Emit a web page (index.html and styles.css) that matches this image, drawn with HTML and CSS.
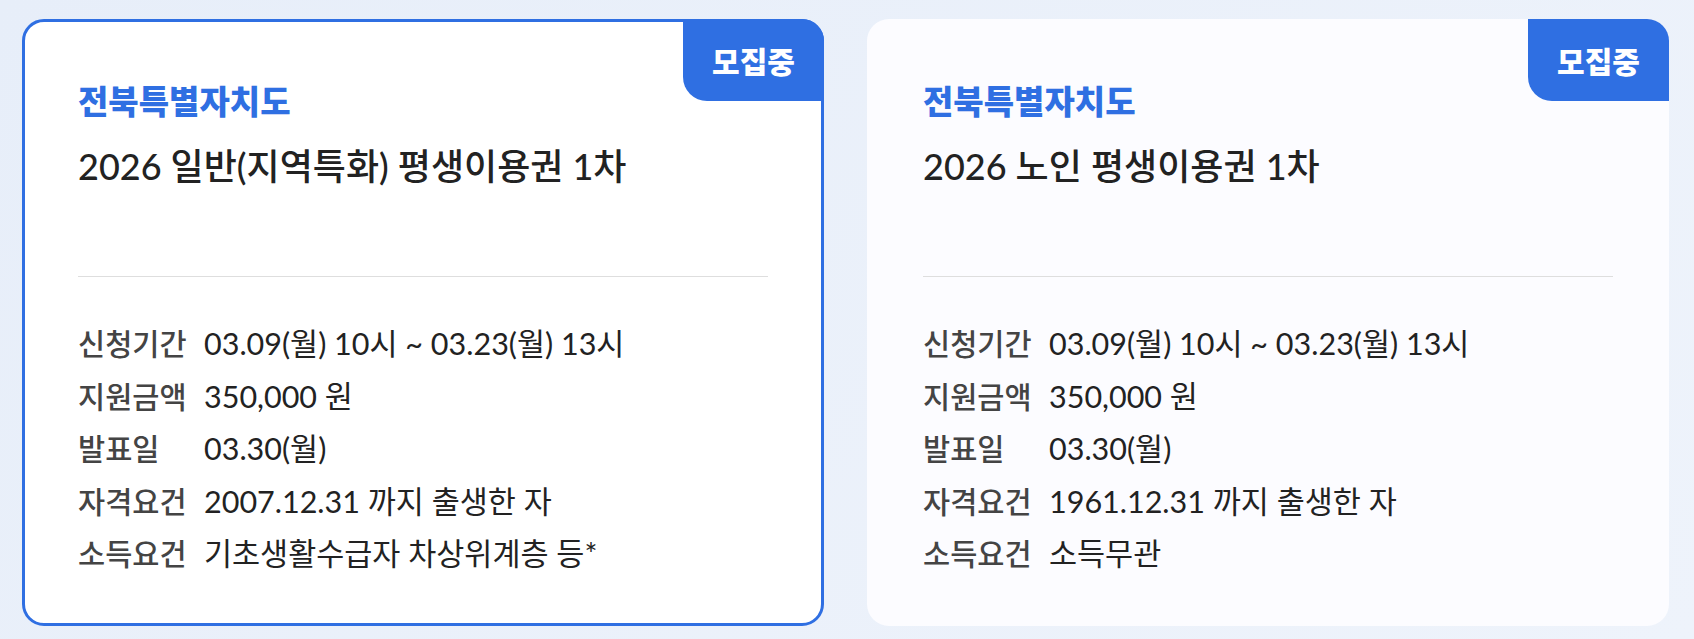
FILE: index.html
```html
<!DOCTYPE html>
<html>
<head>
  <meta charset="utf-8">
  <link rel="stylesheet" href="styles.css">
</head>
<body>
  <div class="voucher-list">
    <div class="voucher-card active">
      <div class="badge">모집중</div>
      <div class="region">전북특별자치도</div>
      <div class="title">2026 일반(지역특화) 평생이용권 1차</div>
      <div class="divider"></div>
      <div class="info">
        <div class="info-row"><span class="info-label">신청기간</span><span class="info-value">03.09(월) 10시 ~ 03.23(월) 13시</span></div>
        <div class="info-row"><span class="info-label">지원금액</span><span class="info-value">350,000 원</span></div>
        <div class="info-row"><span class="info-label">발표일</span><span class="info-value">03.30(월)</span></div>
        <div class="info-row"><span class="info-label">자격요건</span><span class="info-value">2007.12.31 까지 출생한 자</span></div>
        <div class="info-row"><span class="info-label">소득요건</span><span class="info-value">기초생활수급자 차상위계층 등*</span></div>
      </div>
    </div>

    <div class="voucher-card">
      <div class="badge">모집중</div>
      <div class="region">전북특별자치도</div>
      <div class="title">2026 노인 평생이용권 1차</div>
      <div class="divider"></div>
      <div class="info">
        <div class="info-row"><span class="info-label">신청기간</span><span class="info-value">03.09(월) 10시 ~ 03.23(월) 13시</span></div>
        <div class="info-row"><span class="info-label">지원금액</span><span class="info-value">350,000 원</span></div>
        <div class="info-row"><span class="info-label">발표일</span><span class="info-value">03.30(월)</span></div>
        <div class="info-row"><span class="info-label">자격요건</span><span class="info-value">1961.12.31 까지 출생한 자</span></div>
        <div class="info-row"><span class="info-label">소득요건</span><span class="info-value">소득무관</span></div>
      </div>
    </div>
  </div>
</body>
</html>
```

FILE: styles.css
```css
body {
  margin: 0;
  font-family: Lato, "Noto Sans CJK KR", sans-serif;
  background: linear-gradient(135deg, #e7eef9 0%, #eef3fb 100%);
  min-height: 639px;
}

.voucher-list {
  display: grid;
  grid-template-columns: 1fr 1fr;
  gap: 43px;
  padding: 19px 25px 13px 22px;
}

.voucher-card {
  position: relative;
  height: 607px;
  box-sizing: border-box;
  padding: 56px 53px 0 53px;
  background-color: #fcfcff;
  border: 3px solid transparent;
  border-radius: 22px;
}

.voucher-card.active {
  background-color: #fff;
  border-color: #2f6fe2;
}

.badge {
  position: absolute;
  top: -3px;
  right: -3px;
  width: 141px;
  height: 82px;
  display: flex;
  align-items: center;
  justify-content: center;
  background-color: #2f6fe2;
  color: #fff;
  font-family: "Noto Sans CJK KR", sans-serif;
  font-size: 30px;
  font-weight: 900;
  border-radius: 0 22px 0 24px;
}

.region {
  font-family: "Noto Sans CJK KR", sans-serif;
  font-size: 33px;
  font-weight: 900;
  line-height: 44px;
  color: #2f6fe2;
}

.title {
  margin-top: 20px;
  font-size: 36px;
  font-weight: 500;
  line-height: 48px;
  color: #222;
}

.divider {
  margin-top: 86px;
  height: 1px;
  background-color: #dedede;
}

.info {
  margin-top: 46px;
  display: flex;
  flex-direction: column;
  gap: 11.5px;
}

.info-row {
  display: flex;
  align-items: baseline;
  font-size: 30.5px;
  line-height: 40px;
}

.info-label {
  width: 126px;
  flex-shrink: 0;
  font-size: 29.5px;
  color: #444;
  font-weight: 500;
}

.info-value {
  color: #222;
}
```
